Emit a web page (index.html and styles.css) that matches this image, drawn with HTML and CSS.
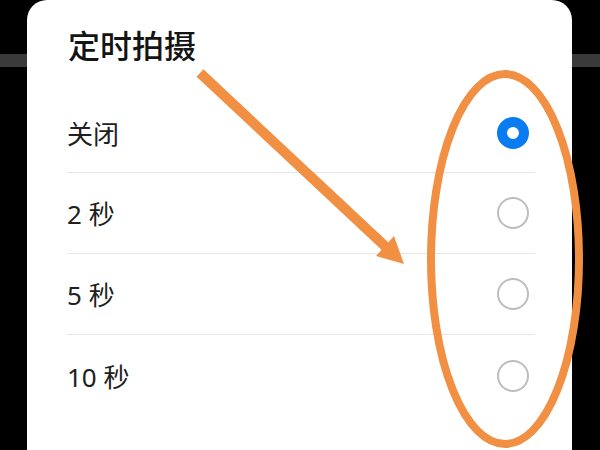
FILE: index.html
```html
<!DOCTYPE html>
<html lang="zh-CN">
<head>
  <meta charset="UTF-8" />
  <meta name="viewport" content="width=device-width, initial-scale=1.0"/>
  <title>定时拍摄</title>
  <link rel="stylesheet" href="styles.css">
</head>
<body>
  <div class="backdrop-bar"></div>

  <div class="dialog">
    <div class="dialog-title">定时拍摄</div>
    <ul class="options">
      <li class="option">
        <span class="label">关闭</span>
        <span class="radio checked"></span>
      </li>
      <li class="option">
        <span class="label">2 秒</span>
        <span class="radio"></span>
      </li>
      <li class="option">
        <span class="label">5 秒</span>
        <span class="radio"></span>
      </li>
      <li class="option">
        <span class="label">10 秒</span>
        <span class="radio"></span>
      </li>
    </ul>
  </div>

  <!-- annotation drawn over the screenshot -->
  <svg class="markup" width="600" height="450" viewBox="0 0 600 450">
    <ellipse cx="505" cy="259" rx="74" ry="185" fill="none" stroke="#f18f43" stroke-width="8"/>
    <line x1="200" y1="73" x2="387" y2="248" stroke="#f18f43" stroke-width="10"/>
    <polygon points="404,264 376,256 394,236" fill="#f18f43"/>
  </svg>
</body>
</html>
```

FILE: styles.css
```css
* {
  margin: 0;
  padding: 0;
  box-sizing: border-box;
}

body {
  background: #000;
  font-family: "Noto Sans", "Noto Sans CJK SC", sans-serif;
  width: 600px;
  height: 450px;
  overflow: hidden;
  position: relative;
}

.backdrop-bar {
  position: absolute;
  left: 0;
  right: 0;
  top: 54px;
  height: 13px;
  background: #3a3a3a;
}

.dialog {
  position: relative;
  margin: 0 28px 0 27px;
  height: 470px;
  background: #fff;
  border-radius: 20px 20px 0 0;
  padding-top: 26px;
}

.dialog-title {
  padding-left: 41px;
  font-size: 32px;
  line-height: 40px;
  font-weight: 500;
  color: #141414;
}

.options {
  list-style: none;
  margin: 27px 37px 0 40px;
}

.option {
  height: 81px;
  display: flex;
  align-items: center;
  justify-content: space-between;
  padding-right: 6px;
  border-bottom: 1px solid #e6e6e6;
}

.option:first-child {
  height: 80px;
}

.option:last-child {
  border-bottom: none;
}

.label {
  font-size: 26px;
  color: #202020;
}

.radio {
  width: 32px;
  height: 32px;
  border-radius: 50%;
  border: 2px solid #bdbdbd;
}

.radio.checked {
  border: 10px solid #0a7cf2;
}

.markup {
  position: absolute;
  left: 0;
  top: 0;
}
```
